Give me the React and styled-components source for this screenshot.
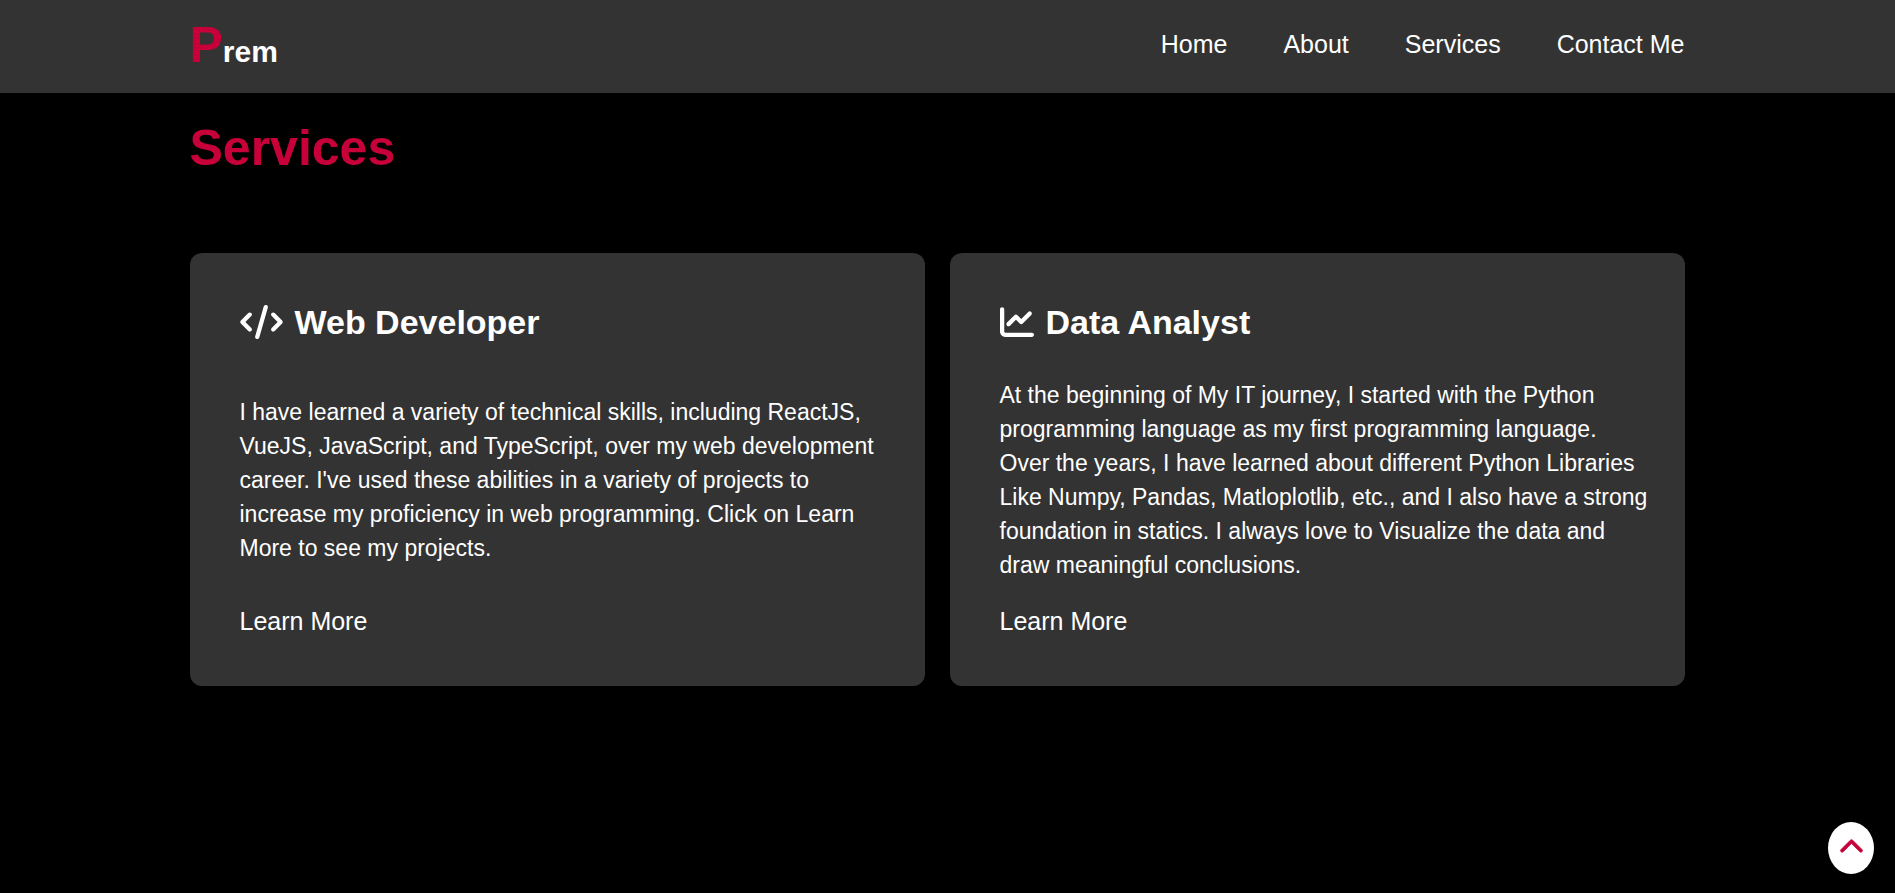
import React from "react";
import styled, { createGlobalStyle } from "styled-components";
import { FaCode, FaChartLine, FaChevronUp } from "react-icons/fa6";

const accent = "#c70039";
const panel = "#333333";

const GlobalStyle = createGlobalStyle`
  * { box-sizing: border-box; margin: 0; padding: 0; }
  html { background: #000; }
  body {
    color: #fff;
    font-family: Arial, "Liberation Sans", sans-serif;
  }
  a { color: inherit; text-decoration: none; }
`;

const Header = styled.header`
  display: flex;
  align-items: flex-start;
  justify-content: space-between;
  padding: 17px calc(10% + 21px) 13px 10%;
  background: ${panel};
`;

const Logo = styled.a`
  font-size: 30px;
  line-height: 57px;
  font-weight: 700;
`;

const Initial = styled.span`
  color: ${accent};
  font-size: 50px;
`;

const NavList = styled.ul`
  display: flex;
  flex-wrap: wrap;
  gap: 56px;
  padding-top: 13px;
  list-style: none;
`;

const NavLink = styled.a`
  display: block;
  font-size: 25px;
  line-height: 29px;
`;

const Main = styled.main`
  padding: 27px calc(10% + 21px) 27px 10%;
`;

const Title = styled.h1`
  margin-bottom: 76px;
  color: ${accent};
  font-size: 50px;
  line-height: 57px;
`;

const CardGrid = styled.div`
  display: grid;
  grid-template-columns: repeat(auto-fit, minmax(400px, 1fr));
  gap: 25px;
`;

const Card = styled.article`
  display: flex;
  flex-direction: column;
  align-items: flex-start;
  justify-content: space-between;
  gap: 25px;
  padding: 50px 35px 50px 50px;
  border-radius: 12px;
  background: ${panel};
`;

const CardTitle = styled.h2`
  display: flex;
  align-items: center;
  gap: 12px;
  margin-bottom: 12px;
  font-size: 34px;
  line-height: 38px;

  svg {
    flex: none;
    width: ${({ $iconWidth }) => $iconWidth}px;
    height: 34px;
  }
`;

const CardText = styled.p`
  font-size: 23px;
  line-height: 34px;
`;

const CardLink = styled.a`
  font-size: 25px;
  line-height: 29px;
`;

const TopButton = styled.button`
  position: fixed;
  right: 21px;
  bottom: 19px;
  display: flex;
  align-items: center;
  justify-content: center;
  width: 46px;
  height: 52px;
  padding-bottom: 1px;
  border: 0;
  border-radius: 50%;
  background: #fff;
  color: ${accent};
  font-size: 25px;
  cursor: pointer;

  svg {
    stroke-width: 16px;
  }
`;

const links = ["Home", "About", "Services", "Contact Me"];

const services = [
  {
    title: "Web Developer",
    Icon: FaCode,
    iconWidth: 43,
    text: "I have learned a variety of technical skills, including ReactJS, VueJS, JavaScript, and TypeScript, over my web development career. I've used these abilities in a variety of projects to increase my proficiency in web programming. Click on Learn More to see my projects.",
  },
  {
    title: "Data Analyst",
    Icon: FaChartLine,
    iconWidth: 34,
    text: "At the beginning of My IT journey, I started with the Python programming language as my first programming language. Over the years, I have learned about different Python Libraries Like Numpy, Pandas, Matloplotlib, etc., and I also have a strong foundation in statics. I always love to Visualize the data and draw meaningful conclusions.",
  },
];

export default function App() {
  return (
    <>
      <GlobalStyle />
      <Header>
        <Logo href="#home">
          <Initial>P</Initial>rem
        </Logo>
        <nav>
          <NavList>
            {links.map((label) => (
              <li key={label}>
                <NavLink href={`#${label.toLowerCase().replace(" ", "-")}`}>{label}</NavLink>
              </li>
            ))}
          </NavList>
        </nav>
      </Header>
      <Main id="services">
        <Title>Services</Title>
        <CardGrid>
          {services.map(({ title, Icon, iconWidth, text }) => (
            <Card key={title}>
              <CardTitle $iconWidth={iconWidth}>
                <Icon aria-hidden="true" />
                {title}
              </CardTitle>
              <CardText>{text}</CardText>
              <CardLink href="#projects">Learn More</CardLink>
            </Card>
          ))}
        </CardGrid>
      </Main>
      <TopButton type="button" aria-label="Back to top" onClick={() => window.scrollTo({ top: 0, behavior: "smooth" })}>
        <FaChevronUp aria-hidden="true" />
      </TopButton>
    </>
  );
}
